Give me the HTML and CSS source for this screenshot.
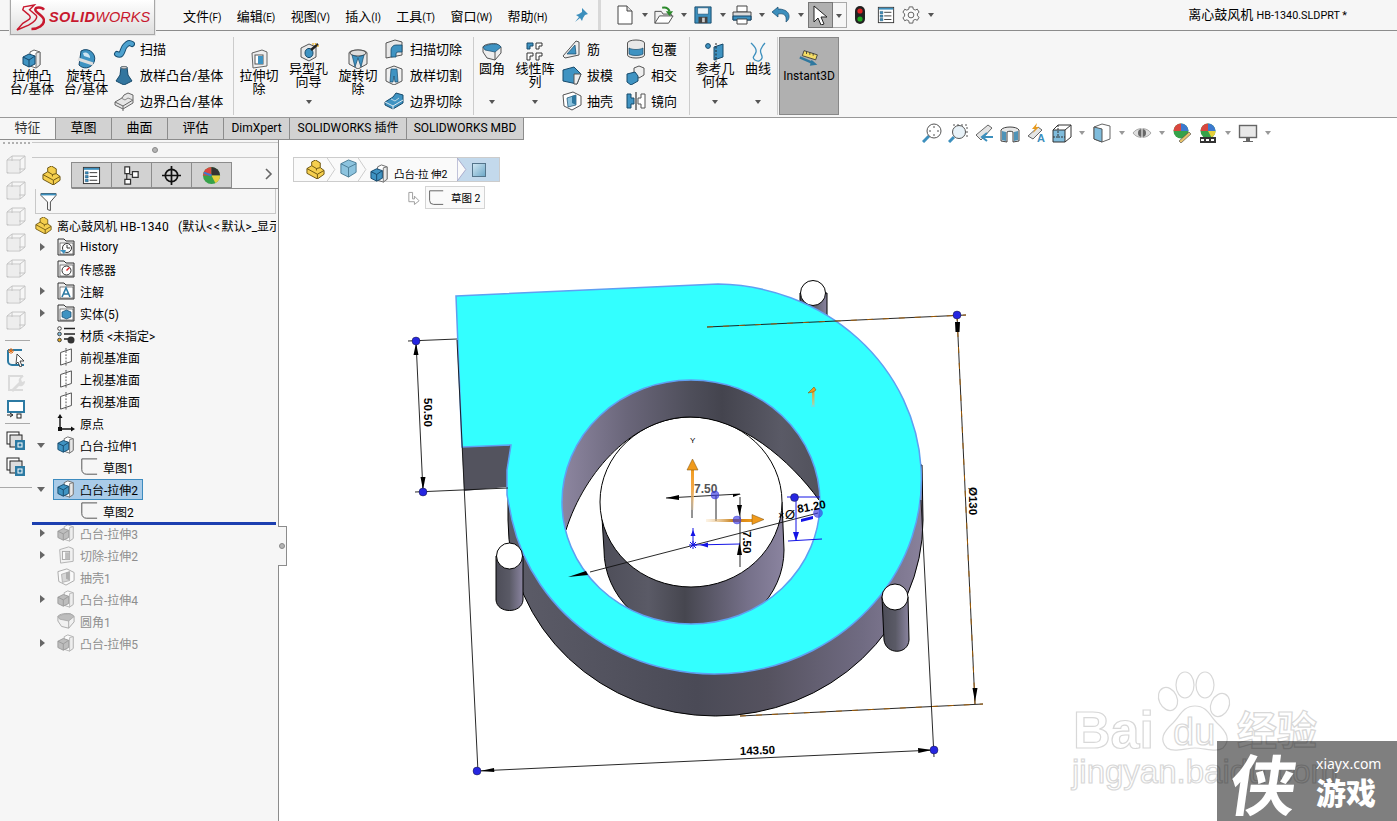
FILE: index.html
```html
<!DOCTYPE html>
<html lang="zh">
<head>
<meta charset="utf-8">
<title>SOLIDWORKS</title>
<link rel="stylesheet" href="styles.css">
</head>
<body>
<svg class="defs" width="0" height="0">
<defs>
<symbol id="boss" viewBox="0 0 20 20"><path d="M8 3l4-2 6 2v13l-4 3-6-2z" fill="#fff" stroke="#666"/><path d="M14 4l4-1v13l-4 3z" fill="#e8e8e8" stroke="#777"/><path d="M1 8l6-3 6 2v8l-6 3-6-3z" fill="#3f93c2" stroke="#15476a"/><path d="M1 8l6 3 6-4M7 11v7" fill="none" stroke="#15476a"/></symbol>
<symbol id="revolve" viewBox="0 0 20 20"><path d="M5 2a9 9 0 0 1 12 13 9 9 0 0 1-14 1z" fill="#3f93c2" stroke="#15476a"/><path d="M2 10l15 5" stroke="#ddd" stroke-width="3"/><path d="M7 4a5 5 0 0 1 7 5l-6-2z" fill="#cfe5f2"/></symbol>
<symbol id="sweep" viewBox="0 0 20 20"><path d="M3 15c6 3 5-5 8-8s4-4 7-2" fill="none" stroke="#174f73" stroke-width="6" stroke-linecap="round"/><path d="M3 15c6 3 5-5 8-8s4-4 7-2" fill="none" stroke="#4ea2cf" stroke-width="4" stroke-linecap="round"/></symbol>
<symbol id="loft" viewBox="0 0 20 20"><path d="M7 2h6l1 8 4 6-8 4-8-4 4-6z" fill="#33769f" stroke="#174a6b"/><ellipse cx="10" cy="2.6" rx="3" ry="1.2" fill="#ccc" stroke="#555" stroke-width=".6"/></symbol>
<symbol id="bound" viewBox="0 0 20 20"><path d="M1 11l7-4 2-3 4-2 5 2v8l-10 6-8-4z" fill="#e6e6e6" stroke="#666"/><path d="M1 11l8 4 10-6M9 15v5" fill="none" stroke="#666"/><path d="M7 7l4 2 3-2 5 2" fill="none" stroke="#888"/></symbol>
<symbol id="cut" viewBox="0 0 20 20"><path d="M3 4l10-3 5 2v14l-14 2z" fill="#eee" stroke="#666"/><rect x="6" y="6" width="8" height="9" fill="#fff" stroke="#555"/><path d="M9 7h5v8H9z" fill="#3f93c2"/></symbol>
<symbol id="hole" viewBox="0 0 20 20"><path d="M2 6l8-4 7 3v10l-7 4-8-4z" fill="#e8e8e8" stroke="#555"/><ellipse cx="10" cy="11" rx="4" ry="4.6" fill="#3f93c2" stroke="#174a6b"/><path d="M12 8l7-6" stroke="#222" stroke-width="2.4"/><path d="M16 1l1 2M18 4l2 0M14 1v2" stroke="#e6a400"/></symbol>
<symbol id="revcut" viewBox="0 0 20 20"><path d="M1 4c0-4 18-4 18 0v11l-9 5-9-5z" fill="#e8e8e8" stroke="#555"/><ellipse cx="10" cy="4" rx="8" ry="3" fill="#ddd" stroke="#555"/><path d="M4 6l3 12 3-9 3 9 3-12-6 2z" fill="#3f93c2" stroke="#174a6b" stroke-width=".7"/></symbol>
<symbol id="swcut" viewBox="0 0 20 20"><path d="M2 4l9-3 7 2v13l-16 3z" fill="#e8e8e8" stroke="#555"/><path d="M7 18v-7a5 5 0 0 1 5-5h6v7h-4a2 2 0 0 0-2 2v3z" fill="#3f93c2" stroke="#174a6b" stroke-width=".8"/></symbol>
<symbol id="lfcut" viewBox="0 0 20 20"><path d="M2 4l8-3 8 3v12l-8 4-8-4z" fill="#f0f0f0" stroke="#555"/><path d="M7 4h6l1 13h-3l-1-6-1 6H6z" fill="#3f93c2" stroke="#174a6b" stroke-width=".7"/></symbol>
<symbol id="bdcut" viewBox="0 0 20 20"><path d="M1 11l8-5 3-4 7 2v8l-10 6-8-4z" fill="#3f93c2" stroke="#174a6b"/><path d="M1 11l8 4 10-6M9 15v4" fill="none" stroke="#dfe9ef"/><path d="M7 8l4 2 4-3" fill="none" stroke="#bcd9e8"/></symbol>
<symbol id="fillet" viewBox="0 0 20 20"><path d="M1 5c1-3 10-4 14-3l4 3v6l-6 7-8-2-4-6z" fill="#eee" stroke="#555"/><path d="M3 8l10 2 6-5c-1-2-4-3-6-3-4 0-9 1-12 3z" fill="#3f93c2" stroke="#174a6b" stroke-width=".7"/><path d="M13 10l0 8" stroke="#555"/></symbol>
<symbol id="pattern" viewBox="0 0 20 20"><g fill="#3f93c2" stroke="#174a6b"><path d="M2 1h6v3h-3v3H2z"/></g><g fill="#fff" stroke="#333"><path d="M11 1h6v3h-3v3h-3zM2 11h6v3H5v4H2zM11 11h6v3h-3v4h-3z"/></g></symbol>
<symbol id="rib" viewBox="0 0 20 20"><path d="M1 17l13-15 3 1v13l-14 3z" fill="#eee" stroke="#555"/><path d="M5 15l8-9 1 9z" fill="#3f93c2" stroke="#174a6b" stroke-width=".7"/></symbol>
<symbol id="draft" viewBox="0 0 20 20"><path d="M1 5l11-3 7 7-4 10-14-3z" fill="#3f93c2" stroke="#174a6b"/><path d="M12 9l7 0-4 10H12z" fill="#eee" stroke="#555"/></symbol>
<symbol id="shell" viewBox="0 0 20 20"><path d="M1 4l10-3 8 4v9l-9 5-8-4z" fill="#fff" stroke="#555"/><path d="M5 7l9-3v10l-8 2z" fill="#8cc3de" stroke="#174a6b" stroke-width=".7"/><path d="M10 5v7l4 2V4z" fill="#2f789f"/></symbol>
<symbol id="wrap" viewBox="0 0 20 20"><ellipse cx="10" cy="4" rx="8.5" ry="3" fill="#e8e8e8" stroke="#555"/><path d="M1.5 4v12c0 4 17 4 17 0V4" fill="#e8e8e8" stroke="#555"/><path d="M3 9c3 2 11 2 14 0v6c-3 2-11 2-14 0z" fill="#3f93c2" stroke="#174a6b" stroke-width=".7"/></symbol>
<symbol id="inter" viewBox="0 0 20 20"><path d="M8 3l5-2 5 2v7l-5 3-5-2z" fill="#eee" stroke="#555"/><path d="M1 9l8-2 3 4v5l-7 4-4-3z" fill="#3f93c2" stroke="#174a6b"/></symbol>
<symbol id="mirror" viewBox="0 0 20 20"><path d="M1 3h4v4h3v6H5v4H1z" fill="#3f93c2" stroke="#174a6b"/><path d="M10 1v18" stroke="#111" stroke-width="1"/><path d="M19 3h-4v4h-3v6h3v4h4z" fill="#fff" stroke="#555"/></symbol>
<symbol id="refgeo" viewBox="0 0 20 20"><circle cx="3" cy="4" r="2.4" fill="#3f93c2" stroke="#174a6b"/><path d="M9 5l9-3v13l-9 3z" fill="#3f93c2" stroke="#174a6b"/><path d="M11 1v19" stroke="#222" stroke-dasharray="2 1.5"/></symbol>
<symbol id="curve" viewBox="0 0 20 20"><path d="M3 1c3 3 6 5 5 9s-5 5-1 8c3 2 6 1 7-2s-3-5-1-9 3-5 4-6" fill="none" stroke="#3c8fbd" stroke-width="1.3"/></symbol>
<symbol id="i3d" viewBox="0 0 24 24"><path d="M6 2l16 5-2 6L4 8z" fill="#f4dc66" stroke="#333"/><path d="M9 3v3M13 4v3M17 5v3" stroke="#333"/><path d="M1 10l16 7" stroke="#2f789f" stroke-width="3"/><path d="M15 13l7 6-9 1z" fill="#2f789f"/></symbol>
<symbol id="newdoc" viewBox="0 0 18 20"><path d="M2 1h9l5 5v13H2z" fill="#fff" stroke="#444"/><path d="M11 1v5h5" fill="#ddd" stroke="#444"/></symbol>
<symbol id="open" viewBox="0 0 22 20"><path d="M1 19V6h7l2 3h9v3" fill="#f1f1f1" stroke="#444"/><path d="M1 19l5-8h15l-5 8z" fill="#fff" stroke="#444"/><path d="M9 2c5-1 7 1 8 4" fill="none" stroke="#2c8a2c" stroke-width="2.4"/><path d="M13 6h8l-4 5z" fill="#2c8a2c"/></symbol>
<symbol id="save" viewBox="0 0 20 20"><path d="M1 1h18v18H1z" fill="#3c8fbd" stroke="#15476a"/><path d="M4 2h12v7H4z" fill="#f0f6f9" stroke="#15476a" stroke-width=".6"/><path d="M5 12h10v7H5z" fill="#444"/><path d="M9 13h3v5H9z" fill="#ccc"/></symbol>
<symbol id="print" viewBox="0 0 20 20"><path d="M5 1h10v6H5z" fill="#fff" stroke="#444"/><path d="M1 7h18v8H1z" fill="#dcdcdc" stroke="#444"/><path d="M1 11h18v4H1z" fill="#3c8fbd" stroke="#15476a"/><path d="M5 14h10v5H5z" fill="#fff" stroke="#444"/></symbol>
<symbol id="undo" viewBox="0 0 20 20"><path d="M7 2L1 7l6 5V9c6-1 9 1 8 8 5-3 5-13-8-13z" fill="#3c8fbd" stroke="#15476a" stroke-width=".7"/></symbol>
<symbol id="cursor" viewBox="0 0 20 20"><path d="M3 1l13 11h-6l3 7-3 1-3-7-4 4z" fill="#fff" stroke="#222"/></symbol>
<symbol id="traffic" viewBox="0 0 12 20"><rect x="1" y="1" width="10" height="18" rx="5" fill="#222"/><circle cx="6" cy="6" r="2.6" fill="#d22"/><circle cx="6" cy="14" r="2.6" fill="#2a2"/></symbol>
<symbol id="lst" viewBox="0 0 20 20"><rect x="1.500" y="1.500" width="17" height="17" fill="#fff" stroke="#333"/><path d="M2 2h16v2H2z" fill="#3c8fbd"/><path d="M3.500 6h3v2.500h-3zM3.500 10h3v2.500h-3zM3.500 14h3v2.500h-3z" fill="#3c8fbd" stroke="#15476a" stroke-width=".5"/><path d="M8 7h8M8 11h8M8 15h8" stroke="#333"/></symbol>
<symbol id="gear" viewBox="0 0 20 20"><path d="M8 1h4l.5 2.500 2.200 1 2.300-1 2 3.400-1.900 1.600v2.400l1.900 1.600-2 3.400-2.300-1-2.200 1L12 19H8l-.5-2.600-2.200-1-2.300 1-2-3.400 1.900-1.600V8.600L1 7l2-3.400 2.300 1 2.200-1z" fill="#fbfbfb" stroke="#555"/><circle cx="10" cy="10" r="3.200" fill="none" stroke="#555"/></symbol>
<symbol id="pin" viewBox="0 0 14 14"><path d="M8 0l6 6-3 1-2 3-1 3-2-3-5 4 4-5-3-2 3-1 3-2z" fill="#3c8fbd"/></symbol>
<symbol id="part" viewBox="0 0 20 20"><path d="M1 9l5-3V2l4-2 5 3v5l4 3v4l-7 5-11-6z" fill="#f5cf4e" stroke="#6a5310"/><path d="M1 9l11 6 7-4M12 15v5M6 6l5 3 4-1M11 9v2" fill="none" stroke="#6a5310"/></symbol>
<symbol id="plane" viewBox="0 0 18 20"><path d="M3 5l12-4v14L3 19z" fill="#fff" stroke="#444"/><path d="M9 0v20" stroke="#444" stroke-dasharray="2 1.500"/></symbol>
<symbol id="sketch" viewBox="0 0 20 20"><path d="M2 1v12a5 5 0 0 0 5 5h12" fill="none" stroke="#555" stroke-width="1.100"/><path d="M2 1h17" stroke="#555" stroke-width="1.100"/></symbol>
<symbol id="origin" viewBox="0 0 18 18"><path d="M3 2v13h13" fill="none" stroke="#111" stroke-width="1.400"/><path d="M3 0l2.500 4h-5zM18 15l-4 2.500v-5z" fill="#111"/><rect x="1" y="13" width="4" height="4" fill="#111"/></symbol>
<symbol id="folder" viewBox="0 0 18 18"><path d="M1 17V1h6l2 2h8v14z" fill="#eee" stroke="#333"/><rect x="3" y="5" width="13" height="11" fill="#fff" stroke="#333" stroke-width=".6"/></symbol>
<symbol id="wire" viewBox="0 0 20 20"><path d="M1 5h13v13H1zM6 1h13v13H6zM1 5l5-4M14 5l5-4M14 18l5-4M1 18l5-4" fill="none" stroke="#888"/><path d="M2 6h11v11H2z" fill="#e4e4e4"/></symbol>
<symbol id="stack" viewBox="0 0 20 20"><rect x="1" y="1" width="12" height="12" fill="#fff" stroke="#222"/><rect x="4" y="4" width="12" height="12" fill="#ddd" stroke="#222"/><rect x="9" y="9" width="10" height="10" fill="#2c7aa3"/><rect x="12" y="12" width="4" height="4" fill="none" stroke="#fff"/></symbol>
</defs>
</svg>

<div class="app">
  <header class="topbar">
    <div class="menuzone">
      <div class="logo">
        <svg class="ds" viewBox="0 0 30 28"><path d="M8 3l11-2-5 5 7 6c2 3-3 7-8 10L1 27l6-7 5-3c4-2 3-4 1-6L7 6z" fill="none" stroke="#c8182e" stroke-width="1.500"/><path d="M29 6c-2-3-9-3-9 0s9 6 9 11-6 9-13 9" fill="none" stroke="#c8182e" stroke-width="2.600"/></svg>
        <span class="brand"><b>SOLID</b>WORKS</span>
      </div>
      <nav class="menu">
        <span>文件<small>(F)</small></span><span>编辑<small>(E)</small></span><span>视图<small>(V)</small></span><span>插入<small>(I)</small></span><span>工具<small>(T)</small></span><span>窗口<small>(W)</small></span><span>帮助<small>(H)</small></span>
      </nav>
      <svg class="pin"><use href="#pin"/></svg>
    </div>
    <div class="quick">
      <span class="qi"><svg class="i18"><use href="#newdoc"/></svg></span><i class="qc"></i>
      <span class="qi"><svg class="i20"><use href="#open"/></svg></span><i class="qc"></i>
      <span class="qi"><svg class="i18"><use href="#save"/></svg></span><i class="qc"></i>
      <span class="qi"><svg class="i20"><use href="#print"/></svg></span><i class="qc"></i>
      <span class="qi"><svg class="i20"><use href="#undo"/></svg></span><i class="qc"></i>
      <span class="selbtn"><svg class="i20"><use href="#cursor"/></svg></span><span class="seldrop"></span>
      <span class="qi qt"><svg class="i20"><use href="#traffic"/></svg></span>
      <span class="qi q6"><svg class="i18"><use href="#lst"/></svg></span>
      <span class="qi q5"><svg class="i18"><use href="#gear"/></svg></span><i class="qc"></i>
    </div>
    <div class="doctitle">离心鼓风机 <span>HB-1340.SLDPRT *</span></div>
  </header>

  <section class="ribbon">
    <div class="group g1">
      <div class="big low w54"><svg class="ri"><use href="#boss"/></svg><span>拉伸凸<br>台/基体</span></div>
      <div class="big low w54"><svg class="ri"><use href="#revolve"/></svg><span>旋转凸<br>台/基体</span></div>
      <div class="smalls">
        <div class="sr"><svg class="si"><use href="#sweep"/></svg>扫描</div>
        <div class="sr"><svg class="si"><use href="#loft"/></svg>放样凸台/基体</div>
        <div class="sr"><svg class="si"><use href="#bound"/></svg>边界凸台/基体</div>
      </div>
    </div>
    <div class="group g2">
      <div class="big low w50"><svg class="ri"><use href="#cut"/></svg><span>拉伸切<br>除</span></div>
      <div class="big w49"><svg class="ri"><use href="#hole"/></svg><span>异型孔<br>向导</span><i class="cr"></i></div>
      <div class="big low w50"><svg class="ri"><use href="#revcut"/></svg><span>旋转切<br>除</span></div>
      <div class="smalls">
        <div class="sr"><svg class="si"><use href="#swcut"/></svg>扫描切除</div>
        <div class="sr"><svg class="si"><use href="#lfcut"/></svg>放样切割</div>
        <div class="sr"><svg class="si"><use href="#bdcut"/></svg>边界切除</div>
      </div>
    </div>
    <div class="group g3">
      <div class="big w36"><svg class="ri"><use href="#fillet"/></svg><span>圆角</span><i class="cr"></i></div>
      <div class="big w50"><svg class="ri"><use href="#pattern"/></svg><span>线性阵<br>列</span><i class="cr"></i></div>
      <div class="smalls tight c3">
        <div class="sr"><svg class="si"><use href="#rib"/></svg>筋</div>
        <div class="sr"><svg class="si"><use href="#draft"/></svg>拔模</div>
        <div class="sr"><svg class="si"><use href="#shell"/></svg>抽壳</div>
      </div>
      <div class="smalls tight c4">
        <div class="sr"><svg class="si"><use href="#wrap"/></svg>包覆</div>
        <div class="sr"><svg class="si"><use href="#inter"/></svg>相交</div>
        <div class="sr"><svg class="si"><use href="#mirror"/></svg>镜向</div>
      </div>
    </div>
    <div class="group g4">
      <div class="big w50"><svg class="ri"><use href="#refgeo"/></svg><span>参考几<br>何体</span><i class="cr"></i></div>
      <div class="big w36"><svg class="ri"><use href="#curve"/></svg><span>曲线</span><i class="cr"></i></div>
    </div>
    <div class="instant"><svg class="i3d"><use href="#i3d"/></svg><span>Instant3D</span></div>
  </section>

  <div class="tabrow">
    <div class="tab w56 on">特征</div><div class="tab w56">草图</div><div class="tab w56">曲面</div><div class="tab w56">评估</div><div class="tab w66">DimXpert</div><div class="tab w117">SOLIDWORKS 插件</div><div class="tab w117">SOLIDWORKS MBD</div>
    <div class="viewbar">
      <span class="vi"><svg class="v20" viewBox="0 0 20 20"><path d="M1 19l6-6" stroke="#3c8fbd" stroke-width="3"/><circle cx="12" cy="8" r="7" fill="#fff" stroke="#555"/><path d="M12 3v2M12 11v2M7 8h2M15 8h2" stroke="#555"/></svg></span>
      <span class="vi"><svg class="v20" viewBox="0 0 20 20"><path d="M5 2h14v14" fill="none" stroke="#555" stroke-dasharray="2 2"/><path d="M1 19l5-5" stroke="#3c8fbd" stroke-width="3"/><circle cx="11" cy="9" r="6.500" fill="#e8f2f8" stroke="#555"/></svg></span>
      <span class="vi"><svg class="v20" viewBox="0 0 20 20"><path d="M2 12L14 2l4 3L7 17z" fill="#e4e4e4" stroke="#666"/><path d="M19 14H9M13 10l-5 4 5 4" fill="none" stroke="#3c8fbd" stroke-width="2"/></svg></span>
      <span class="vi"><svg class="v20" viewBox="0 0 20 20"><path d="M1 7c2-4 16-4 18 0v11l-6 1V9c-1-1-5-1-6 0v10l-6-1z" fill="#e8e8e8" stroke="#444"/><path d="M2 8l4 1v9l-4-1zM14 9l4-1v9l-4 1z" fill="#4f93b8"/></svg></span>
      <span class="vi"><svg class="v20" viewBox="0 0 20 20"><path d="M2 13L12 4l4 3-9 9z" fill="#e4e4e4" stroke="#666"/><path d="M11 0L6 6h3L7 10l6-6h-3z" fill="#e89a1c"/><text class="vtxt" x="11" y="19">A</text></svg></span>
      <span class="vi"><svg class="v20" viewBox="0 0 20 20"><path d="M1 7h12v12H1z" fill="#7fbcdc" stroke="#333"/><path d="M1 7l5-5h13v12l-6 5M13 7l6-5" fill="none" stroke="#333"/><path d="M6 2v12H1M6 14l7 0" fill="none" stroke="#333" stroke-dasharray="2 1"/></svg></span><i class="vc"></i>
      <span class="vi"><svg class="v20" viewBox="0 0 20 20"><path d="M2 4l8-3 8 2v13l-8 3-8-3z" fill="#fff" stroke="#666"/><path d="M2 4l8 2v13l-8-3z" fill="#7fbcdc" stroke="#555"/></svg></span><i class="vc"></i>
      <span class="vi"><svg class="v20" viewBox="0 0 20 20"><path d="M1 10c4-6 14-6 18 0-4 6-14 6-18 0z" fill="#ddd" stroke="#aaa"/><circle cx="10" cy="10" r="4" fill="#666"/><path d="M10 3v14" stroke="#fff"/></svg></span><i class="vc"></i>
      <span class="vi"><svg class="v20" viewBox="0 0 20 20"><circle cx="9" cy="8" r="7.500" fill="#36a24a"/><path d="M9 8L1.500 8a7.500 7.500 0 0 1 7.500-7.500z" fill="#d9473f"/><path d="M9 8V.5A7.500 7.500 0 0 1 16.500 8z" fill="#3c79cf"/><path d="M7 18l10-9 2 2-10 9z" fill="#e8c26a" stroke="#444" stroke-width=".6"/></svg></span>
      <span class="vi"><svg class="v20" viewBox="0 0 20 20"><circle cx="10" cy="8" r="7.500" fill="#36a24a"/><path d="M10 8H2.500A7.500 7.500 0 0 1 10 .5z" fill="#d9473f"/><path d="M10 8V.5A7.500 7.500 0 0 1 17.500 8z" fill="#3c79cf"/><path d="M10 8h7.500a7.500 7.500 0 0 1-4 6.500z" fill="#e5cf3c"/><path d="M2 14h16v6H2z" fill="#333"/><path d="M3 16h3v2H3zM8 16h3v2H8zM13 16h3v2h-3z" fill="#fff"/></svg></span><i class="vc"></i>
      <span class="vi"><svg class="v20" viewBox="0 0 20 20"><rect x="1.500" y="2.500" width="17" height="12" fill="#e8e8e8" stroke="#666" stroke-width="1.400"/><path d="M8 15h4v3h3v1H5v-1h3z" fill="#666"/></svg></span><i class="vc"></i>
    </div>
  </div>

  <main class="main">
    <aside class="panel">
      <div class="strip">
        <div class="grip"></div>
        <svg class="st fade"><use href="#wire"/></svg><svg class="st fade"><use href="#wire"/></svg><svg class="st fade"><use href="#wire"/></svg><svg class="st fade"><use href="#wire"/></svg><svg class="st fade"><use href="#wire"/></svg><svg class="st fade"><use href="#wire"/></svg><svg class="st fade"><use href="#wire"/></svg>
        <hr class="sp s1">
        <svg class="st" viewBox="0 0 20 20"><path d="M2 3v11a4 4 0 0 0 4 4h12M2 3h14" fill="none" stroke="#2c7aa3" stroke-width="2"/><path d="M5 1v6M2 4h6M3 2l4 4M7 2L3 6" stroke="#e2701a"/><path d="M11 7l7 7h-4l2 5-2 1-2-5-2 2z" fill="#fff" stroke="#222" stroke-width=".8"/></svg>
        <svg class="st fade" viewBox="0 0 20 20"><path d="M2 2h15v2H4v12h13v2H2z" fill="#bbb"/><path d="M5 17l8-8c-1-3 1-6 5-6l-3 3 1 3 3-1c0 4-3 6-6 5l-6 6z" fill="#bbb"/></svg>
        <svg class="st" viewBox="0 0 20 20"><rect x="2" y="2" width="16" height="11" fill="#fff" stroke="#2c7aa3" stroke-width="2"/><path d="M1 16h5M4 14l3 2-3 2" fill="none" stroke="#222"/><rect x="11" y="15" width="4" height="4" fill="#fff" stroke="#222"/></svg>
        <hr class="sp s2">
        <svg class="st"><use href="#stack"/></svg>
        <svg class="st"><use href="#stack"/></svg>
        <hr class="sp s3">
      </div>
      <div class="pane">
        <div class="handle"><i class="knob"></i></div>
        <div class="mgr">
          <span class="mt act"><svg class="mi"><use href="#part"/></svg></span>
          <span class="mt"><svg class="mi"><use href="#lst"/></svg></span>
          <span class="mt"><svg class="mi" viewBox="0 0 20 20"><path d="M3 1h5v7H3zM11 6h6v6h-6zM3 14h6v5H3zM5 8v6" fill="#fff" stroke="#333" stroke-width="1.300"/><path d="M8 9h3" stroke="#333"/></svg></span>
          <span class="mt"><svg class="mi" viewBox="0 0 20 20"><circle cx="10" cy="10" r="6.500" fill="none" stroke="#111" stroke-width="1.800"/><path d="M10 0v20M0 10h20" stroke="#111" stroke-width="1.800"/></svg></span>
          <span class="mt"><svg class="mi" viewBox="0 0 20 20"><circle cx="10" cy="10" r="9" fill="#36a24a"/><path d="M10 10H1a9 9 0 0 1 9-9z" fill="#d9473f"/><path d="M10 10V1a9 9 0 0 1 9 9z" fill="#333"/><path d="M10 10h9a9 9 0 0 1-5 8z" fill="#e5cf3c"/><path d="M2 7l8 3" stroke="#3c79cf" stroke-width="2"/></svg></span>
          <svg class="chev" viewBox="0 0 8 12"><path d="M1 1l5 5-5 5" fill="none" stroke="#666" stroke-width="1.600"/></svg>
        </div>
        <div class="filter"><svg class="funnel" viewBox="0 0 18 20"><path d="M1 1h16v2l-6 7v9l-3-1v-8L1 3z" fill="#fff" stroke="#444"/><path d="M1 1h16v2H1z" fill="#3c8fbd"/></svg></div>
        <div class="tree">
          <div class="root"><svg class="ti"><use href="#part"/></svg><span class="rtext">离心鼓风机 <span class="rl">HB-1340</span>&nbsp;&nbsp; (默认<span class="lt">&lt;&lt;</span>默认&gt;_显示状态 1&gt;)</span></div>
          <div class="row"><i class="ar"></i><span class="node"><svg class="ti" viewBox="0 0 18 18"><use href="#folder" width="18" height="18"/><circle cx="10" cy="10" r="4.500" fill="#fff" stroke="#333"/><path d="M10 7v3h3" fill="none" stroke="#333"/><path d="M3 12h6l-2 4z" fill="#3c8fbd"/></svg>History</span></div>
          <div class="row"><i class="noar"></i><span class="node"><svg class="ti" viewBox="0 0 18 18"><use href="#folder" width="18" height="18"/><circle cx="9.500" cy="10.500" r="4.500" fill="#fff" stroke="#333"/><path d="M9.500 10.500l3-3" stroke="#d22" stroke-width="1.400"/></svg>传感器</span></div>
          <div class="row"><i class="ar"></i><span class="node"><svg class="ti" viewBox="0 0 18 18"><use href="#folder" width="18" height="18"/><path d="M5 15l4-9 4 9M6.500 12h5" fill="none" stroke="#2c7aa3" stroke-width="1.600"/></svg>注解</span></div>
          <div class="row"><i class="ar"></i><span class="node"><svg class="ti" viewBox="0 0 18 18"><use href="#folder" width="18" height="18"/><path d="M5 8l4.500-2 4.500 2v5l-4.500 2L5 13z" fill="#3f93c2" stroke="#15476a" stroke-width=".7"/></svg>实体(5)</span></div>
          <div class="row"><i class="noar"></i><span class="node"><svg class="ti" viewBox="0 0 18 18"><circle cx="2.500" cy="2.500" r="1.800" fill="#fff" stroke="#444"/><circle cx="2.500" cy="8" r="1.800" fill="#7fbcdc" stroke="#444"/><circle cx="2.500" cy="14" r="1.800" fill="#e2a81a" stroke="#444"/><path d="M7 2.500h11M7 8h11M7 13h4" stroke="#222" stroke-width="1.500"/><circle cx="14" cy="14" r="3.500" fill="#333"/></svg>材质 &lt;未指定&gt;</span></div>
          <div class="row"><i class="noar"></i><span class="node"><svg class="ti"><use href="#plane"/></svg>前视基准面</span></div>
          <div class="row"><i class="noar"></i><span class="node"><svg class="ti"><use href="#plane"/></svg>上视基准面</span></div>
          <div class="row"><i class="noar"></i><span class="node"><svg class="ti"><use href="#plane"/></svg>右视基准面</span></div>
          <div class="row"><i class="noar"></i><span class="node"><svg class="ti"><use href="#origin"/></svg>原点</span></div>
          <div class="row"><i class="ar down"></i><span class="node"><svg class="ti"><use href="#boss"/></svg>凸台-拉伸1</span></div>
          <div class="row child"><span class="node"><svg class="ti"><use href="#sketch"/></svg>草图1</span></div>
          <div class="row"><i class="ar down"></i><span class="node sel"><svg class="ti"><use href="#boss"/></svg>凸台-拉伸2</span></div>
          <div class="row child"><span class="node"><svg class="ti"><use href="#sketch"/></svg>草图2</span></div>
          <div class="rollback"></div>
          <div class="row off"><i class="ar"></i><span class="node"><svg class="ti"><use href="#boss"/></svg>凸台-拉伸3</span></div>
          <div class="row off"><i class="ar"></i><span class="node"><svg class="ti"><use href="#cut"/></svg>切除-拉伸2</span></div>
          <div class="row off"><i class="noar"></i><span class="node"><svg class="ti"><use href="#shell"/></svg>抽壳1</span></div>
          <div class="row off"><i class="ar"></i><span class="node"><svg class="ti"><use href="#boss"/></svg>凸台-拉伸4</span></div>
          <div class="row off"><i class="noar"></i><span class="node"><svg class="ti"><use href="#fillet"/></svg>圆角1</span></div>
          <div class="row off"><i class="ar"></i><span class="node"><svg class="ti"><use href="#boss"/></svg>凸台-拉伸5</span></div>
        </div>
      </div>
      <div class="gripper"><i class="knob"></i></div>
    </aside>

    <div class="canvas">
      <svg class="model" viewBox="279 140 1118 681" width="1118" height="681">
        <defs>
          <linearGradient id="wallG" gradientUnits="userSpaceOnUse" x1="510" y1="0" x2="925" y2="0"><stop offset="0" stop-color="#5c5c68"/><stop offset=".45" stop-color="#4a4a56"/><stop offset=".62" stop-color="#55525f"/><stop offset=".85" stop-color="#706b82"/><stop offset="1" stop-color="#8a829c"/></linearGradient>
          <linearGradient id="bandG" gradientUnits="userSpaceOnUse" x1="562" y1="0" x2="820" y2="0"><stop offset="0" stop-color="#8d86a0"/><stop offset=".25" stop-color="#6a667a"/><stop offset=".5" stop-color="#4e4e5a"/><stop offset=".62" stop-color="#44444e"/><stop offset=".85" stop-color="#5a5a66"/><stop offset="1" stop-color="#52525c"/></linearGradient>
          <linearGradient id="hubG" gradientUnits="userSpaceOnUse" x1="603" y1="0" x2="785" y2="0"><stop offset="0" stop-color="#4e4e59"/><stop offset=".25" stop-color="#5a5a66"/><stop offset=".45" stop-color="#46464f"/><stop offset=".8" stop-color="#76718a"/><stop offset="1" stop-color="#8b84a0"/></linearGradient>
          <linearGradient id="pegG"><stop offset="0" stop-color="#4d4d58"/><stop offset=".5" stop-color="#5a5a66"/><stop offset="1" stop-color="#8a84a0"/></linearGradient>
          <linearGradient id="upG" x1="0" y1="0" x2="0" y2="1"><stop offset="0" stop-color="#f09a1c"/><stop offset=".5" stop-color="#f3a94a"/><stop offset="1" stop-color="#f6d7a8" stop-opacity=".3"/></linearGradient>
          <linearGradient id="rightG"><stop offset="0" stop-color="#f6d7a8" stop-opacity=".3"/><stop offset=".6" stop-color="#c47a10"/><stop offset="1" stop-color="#f09a1c"/></linearGradient>
          <linearGradient id="smG" x1="0" y1="0" x2="0" y2="1"><stop offset="0" stop-color="#f09a1c"/><stop offset="1" stop-color="#9fd6b0"/></linearGradient>
          <clipPath id="holeC"><ellipse cx="691" cy="502" rx="129" ry="122"/></clipPath>
        </defs>
        <path class="ln" d="M800 293v22l27 15v-37z" fill="url(#pegG)"/>
        <circle class="ln" cx="813" cy="293" r="12.500" fill="#fff"/>
        <path class="ln" d="M508 520A207.500 196 0 0 0 923 520L922 465L508 480Z" fill="url(#wallG)"/>
        <path d="M462 447L511 445L507 487L464 491Z" fill="#53535e"/>
        <ellipse cx="691" cy="502" rx="129" ry="122" fill="#fff"/>
        <g clip-path="url(#holeC)">
          <path class="ln" d="M601 502L604 550A90 85 0 0 0 784 550L782 502Z" fill="url(#hubG)"/>
          <ellipse class="ln" cx="691" cy="502" rx="91" ry="85" fill="#fff"/>
          <path d="M566 530C585 470 635 417 690 417C740 417 790 460 819 500L830 380H550V530Z" fill="url(#bandG)"/>
          <path class="ln" d="M566 530C585 470 635 417 690 417C740 417 790 460 819 500" fill="none"/>
        </g>
        <path class="cy" fill-rule="evenodd" d="M456 296L718 284A207 195 0 1 1 512 520L507 495L507 470L511 445L462 447ZM562 502A129 122 0 1 0 820 502A129 122 0 1 0 562 502Z"/>
        <path class="ln" d="M496 556V600C497 614 522 614 523 600V556Z" fill="url(#pegG)"/>
        <circle class="ln" cx="509.500" cy="556" r="13" fill="#fff"/>
        <path class="ln" d="M882 597L884 640C886 655 908 655 909 640L908 597Z" fill="url(#pegG)"/>
        <circle class="ln" cx="895" cy="597" r="13" fill="#fff"/>

        <path class="dim" d="M408 341L457 339M415 492L508 488M416 341L423 492"/>
        <path class="ah" d="M416 343l-2.500 12h5zM423 490l-2.500-13h5z"/>
        <text class="dt" transform="translate(424 398) rotate(90)">50.50</text>

        <path class="dim" d="M707 327L966 315M740 716L983 704M957 315L975 704"/>
        <path class="dimo" d="M707 327L966 315M740 716L983 704M957 315L975 704"/>
        <path class="ah" d="M955 322h5l-.5 10h-4zM975 702l-2.500-14h5z"/>
        <text class="dt" transform="translate(969 487) rotate(90)">Ø130</text>

        <path class="dim" d="M457 340L478 772M921 500L934 757M477 771L934 750"/>
        <path class="ah" d="M480 771l14-3 .3 4zM932 750l-14-2 .3 5z"/>
        <text class="dt" transform="translate(740 755) rotate(-2)">143.50</text>

        <path class="dim" d="M590 572L818 513"/>
        <path class="ah" d="M568 577l18-6 2 4z"/>

        <text class="yl" x="690" y="443">Y</text>
        <path class="dim" d="M692 488V518M666 498L740 494M716 496V521M740 497V567"/>
        <path class="ah" d="M666 498l13-3v5zM692 520v-1M733 494l8 0-8 3zM737 505h5l-2.500 11zM737 555h5l-2.500-13z"/>
        <rect x="691" y="468" width="3" height="42" fill="url(#upG)"/>
        <path class="orh" d="M692.500 459l5.500 11h-11z"/>
        <rect x="706" y="519" width="46" height="3" fill="url(#rightG)"/>
        <path class="orh" d="M764 519.500l-12 5v-10z"/>
        <text class="dg" x="694" y="493">7.50</text>
        <text class="dt" transform="translate(743 531) rotate(90)">7.50</text>
        <path class="bl" d="M693 528V545M693 545L740 544M787 497L820 497M796 497V540M788 541L822 539"/>
        <path class="blf" d="M693 530l-2.500 6h5zM700 545l8-2.500v5zM796 541l-3-9h6zM801 519l12-3v3l-12 3z"/>
        <path class="star" d="M693 541v8M689 545h8M690 542l6 6M696 542l-6 6"/>
        <circle class="blp" cx="715" cy="495" r="4"/><circle class="blp" cx="737" cy="520" r="4"/>
        <circle class="bd" cx="794.500" cy="497.500" r="4"/><circle class="blp" cx="818" cy="513" r="4.500"/>
        <circle class="bd" cx="416" cy="341" r="4"/><circle class="bd" cx="423" cy="492" r="4"/>
        <circle class="bd" cx="957" cy="315" r="4"/><circle class="bd" cx="477" cy="771" r="4"/><circle class="bd" cx="934" cy="750" r="4"/>
        <text class="dphi" x="785" y="519">Ø</text>
        <text class="dt" transform="translate(798 513) rotate(-10)">81.20</text>
        <text class="dx" x="778" y="519">×</text>
        <rect x="812" y="389" width="2.500" height="16" fill="url(#smG)"/><path class="orh" d="M808 393l6-6 2 3-3 2z"/><path class="tick" d="M811 406h4"/>
      </svg>

      <div class="crumb">
        <span class="cseg"><svg class="ci"><use href="#part"/></svg></span>
        <svg class="csep" viewBox="0 0 10 24"><path d="M1 0l8 12-8 12" fill="none" stroke="#ccc"/></svg>
        <span class="cseg s2"><svg class="ci" viewBox="0 0 20 20"><path d="M2 5l8-4 8 3v10l-8 5-8-4z" fill="#8cc3de" stroke="#4a7c96"/><path d="M2 5l8 4 8-4M10 9v10" fill="none" stroke="#4a7c96"/></svg></span>
        <svg class="csep" viewBox="0 0 10 24"><path d="M1 0l8 12-8 12" fill="none" stroke="#ccc"/></svg>
        <span class="cseg s3"><svg class="ci"><use href="#boss"/></svg><span class="ctext">凸台-拉 伸2</span></span>
        <span class="cact"><svg class="cend" viewBox="0 0 10 24"><path d="M0 0l9 12-9 12z" fill="#fafafa" stroke="#aac"/></svg><i class="csq"></i></span>
      </div>
      <div class="subcrumb">
        <svg class="sarrow" viewBox="0 0 14 14"><path d="M2 1h4v7h2V5l5 5-5 4v-3H2z" fill="#fff" stroke="#999"/></svg>
        <span class="sbox"><svg class="sbi"><use href="#sketch"/></svg><span>草图 2</span></span>
      </div>

      <svg class="baidu" viewBox="0 0 330 150" width="330" height="150">
        <text class="bk bk1" x="3" y="80">Bai</text>
        <g class="paw">
          <ellipse cx="115" cy="17" rx="9" ry="13"/><ellipse cx="135" cy="17" rx="9" ry="13"/><ellipse cx="98" cy="31" rx="9" ry="12" transform="rotate(-25 98 31)"/><ellipse cx="150" cy="37" rx="9" ry="12" transform="rotate(25 150 37)"/>
          <path d="M125 38c-12 0-15 10-22 17-10 9-14 17-6 25 7 5 18 0 28 0s21 5 28 0c8-8 4-16-6-25-7-7-10-17-22-17z"/>
        </g>
        <text class="bk bk2" x="103" y="77">du</text>
        <text class="bk bk3" x="167" y="77">经验</text>
        <text class="bk bk4" x="2" y="115">jingyan.baidu.com</text>
      </svg>
      <div class="xia">
        <span class="xia1">侠</span>
        <div class="xiar"><span class="xia2">xiayx.com</span><span class="xia3">游戏</span></div>
      </div>
    </div>
  </main>
</div>
</body>
</html>
```

FILE: styles.css
```css
*{box-sizing:border-box}
html,body{margin:0;padding:0}
body{width:1397px;height:821px;overflow:hidden;background:#fff;color:#000;font:12px Roboto,"Noto Sans CJK SC",sans-serif}
.defs{position:absolute}
.app{display:flex;flex-direction:column;height:821px}
svg{display:block;flex:none}

/* top bar */
.topbar{display:flex;height:31px;background:#f6f6f6;border-bottom:1px solid #8c8c8c;flex:none}
.menuzone{display:flex;align-items:center;width:601px;height:30px;border-right:3px solid #d8d8d8}
.logo{position:relative;z-index:3;display:flex;align-items:center;gap:4px;width:145px;height:35px;margin:0 0 0 10px;padding:0 0 0 5px;align-self:flex-start;background:linear-gradient(#fff,#dedede);border:1px solid #a8a8a8;border-top:0;outline:1px solid #e8e8e8}
.ds{width:29px;height:27px}
.brand{font:italic 14.500px "Liberation Sans",sans-serif;color:#c8182e;white-space:nowrap}
.brand b{font-weight:700;letter-spacing:.4px}
.menu{display:flex;gap:15.300px;margin-left:28px;font-size:13px;white-space:nowrap}
.menu small{font-size:10px}
.pin{width:14px;height:14px;margin-left:26px}
.quick{display:flex;align-items:center;height:30px;margin-left:14px}
.qi{display:flex;width:20px;height:30px;align-items:center;justify-content:center}
.qc{display:block;width:19px;height:30px;position:relative}
.qc::after,.vc::after,.cr::after{content:"";position:absolute;left:50%;top:50%;margin:-2px 0 0 -3px;border:3px solid transparent;border-top:4px solid #555;border-bottom:0}
.i18{width:18px;height:20px}
.i20{width:20px;height:20px}
.selbtn{display:flex;align-items:center;justify-content:center;width:25px;height:26px;margin-left:-2px;background:#b0b0b0;border:1px solid #777}
.seldrop{position:relative;display:block;width:14px;height:26px;background:#f6f6f6;border:1px solid #aaa;border-left:0}
.seldrop::after{content:"";position:absolute;left:3px;top:11px;border:3px solid transparent;border-top:4px solid #555;border-bottom:0}
.qt{margin-left:3px}
.q6{margin-left:6px}
.q5{margin-left:5px}
.doctitle{margin-left:auto;padding:0 50px 0 0;line-height:30px;font-size:13px;white-space:nowrap}
.doctitle span{font-size:10.800px}

/* ribbon */
.ribbon{display:flex;flex:none;height:87px;padding-top:6px;background:#f6f6f6;border-bottom:1px solid #999;font-size:13px;line-height:13px}
.group{display:flex;height:78px;border-right:1px solid #ccc}
.g1{width:234px;padding-left:5px}
.g2{width:240px}
.g3{width:216px}
.g4{width:88px}
.big{display:flex;flex-direction:column;align-items:center;height:78px;padding-top:5px;text-align:center;white-space:nowrap}
.big.low{padding-top:12px}
.big span{display:block}
.w54{width:54px}.w50{width:50px}.w49{width:49px}.w36{width:36px}
.ri{width:20px;height:20px}
.cr{position:relative;display:block;width:10px;height:6px;margin-top:auto;margin-bottom:10px}
.smalls{display:flex;flex-direction:column;margin-top:-1px}
.sr{display:flex;align-items:center;gap:5px;height:26px;white-space:nowrap}
.si{width:22px;height:20px}
.tight .sr{gap:4px}
.c3{margin-left:1px}
.c4{margin-left:12px}
.instant{display:flex;flex-direction:column;align-items:center;width:60px;height:78px;margin-left:1px;padding-top:11px;background:#b0b0b0;border:1px solid #888;font-size:12px;line-height:14px}
.i3d{width:20px;height:20px}

/* tabs */
.tabrow{display:flex;flex:none;height:22px;background:#fff;position:relative;z-index:2}
.tab{height:22px;line-height:20px;text-align:center;background:#d2d2d2;border-right:1px solid #8c8c8c;border-bottom:1px solid #8c8c8c;white-space:nowrap}
.tab.on{background:#f6f6f6;border-bottom-color:#8c8c8c;font-size:13px;color:#333}
.tab.w56{width:56px;font-size:13px}
.w66{width:66px}.w117{width:117px}
.viewbar{display:flex;margin:5px 0 0 395px;height:20px}
.vi{display:flex;justify-content:center;width:26px}
.vc{position:relative;display:block;width:14px;height:20px}
.vc::after{border-top-color:#999}
.v20{width:20px;height:20px}
.vtxt{font:bold 11px "Liberation Sans",sans-serif;fill:#3c8fbd}

/* panel */
.main{flex:1;display:flex;min-height:0}
.panel{position:relative;z-index:1;display:flex;flex:none;width:279px;background:#f6f6f6;border-right:1px solid #8c8c8c}
.strip{position:relative;width:32px;padding-top:12px;display:flex;flex-direction:column;align-items:center}
.grip{position:absolute;left:3px;top:2px;width:27px;border-top:2px dotted #b0b0b0}
.st{width:20px;height:20px;margin:3px 0}
.fade{opacity:.45}
.sp{border:0;height:1px;background:#aaa;margin:0}
.s1{width:25px;margin:6px 0 3px 3px}
.s2{width:25px;margin:1px 0 4px 3px}
.s3{width:32px;margin:7px 0 0}
.pane{width:246px;display:flex;flex-direction:column}
.handle{height:16px;margin-top:2px;border-top:1px solid #c8c8c8;border-bottom:1px solid #c8c8c8;display:flex;align-items:center;justify-content:center}
.knob{display:block;width:6px;height:6px;border-radius:50%;background:#b4b4b4;border:1px solid #888}
.mgr{position:relative;display:flex;height:27px;margin-top:4px;padding-right:46px;border-bottom:1px solid #8c8c8c}
.mt{display:flex;align-items:center;justify-content:center;width:40px;height:26px;background:#d2d2d2;border:1px solid #8c8c8c;border-left:0}
.mt.act{background:#f6f6f6;border-top:0;border-bottom:1px solid #f6f6f6;margin-bottom:-1px;height:27px}
.mi{width:19px;height:19px}
.chev{position:absolute;right:5px;top:6px;width:8px;height:12px}
.filter{height:25px;margin:0 2px 0 3px;background:#f6f6f6;border:1px solid #c8c8c8;border-top:0;padding:3px 0 0 4px}
.funnel{width:17px;height:20px}
.tree{font-size:12px}
.root{display:flex;align-items:center;height:22px;padding-left:3px;white-space:nowrap;overflow:hidden;width:244px}
.root .ti{width:17px;height:17px;margin-right:5px}
.rl{letter-spacing:.4px}
.lt{letter-spacing:1.500px}
.row{display:flex;align-items:center;height:22px;padding-left:5px;white-space:nowrap}
.child{padding-left:45px}
.ar,.noar{display:block;width:17px;flex:none}
.ar{position:relative;height:10px}
.ar::after{content:"";position:absolute;left:3px;top:1px;border:4px solid transparent;border-left:5px solid #666;border-right:0}
.ar.down::after{left:0;top:3px;border:4px solid transparent;border-top:5px solid #666;border-bottom:0}
.node{display:flex;align-items:center;gap:5px;height:21px;padding:0 4px 0 3px;border:1px solid transparent;margin-left:-1px}
.ti{width:18px;height:18px}
.sel{background:#a9cbe8;border-color:#3d8bbf}
.rollback{position:relative;height:3px;margin:0 2px -3px 0;background:#1c3fb0}
.off{color:#8e8e8e}
.off .ti{filter:grayscale(1);opacity:.5}
.gripper{position:absolute;right:-9px;top:386px;display:flex;align-items:center;justify-content:center;width:9px;height:40px;background:#f6f6f6;border:1px solid #8c8c8c;border-left:0}

/* canvas */
.canvas{position:relative;flex:1;overflow:hidden;background:#fff}
.model{position:absolute;left:0;top:0}
.ln{stroke:#000;stroke-width:1}
.cy{fill:#33ffff;stroke:#5f9ff2;stroke-width:1.500}
.dim{fill:none;stroke:#111;stroke-width:.9}
.dimo{fill:none;stroke:#a85f00;stroke-width:.9;stroke-dasharray:6 10}
.ah{fill:#000}
.dt{font:bold 11.500px "Liberation Sans",sans-serif;fill:#000}
.dg{font:bold 12px "Liberation Sans",sans-serif;fill:#555}
.dphi{font:13px "Liberation Sans",sans-serif;fill:#000}
.dx{font:11px "Liberation Sans",sans-serif;fill:#000}
.yl{font:8px "Liberation Sans",sans-serif;fill:#000}
.orh{fill:#f09a1c;stroke:#7a4d08;stroke-width:.5}
.tick{stroke:#9cc;stroke-width:1}
.bl{fill:none;stroke:#1414e6;stroke-width:1}
.blf{fill:#1414e6}
.star{stroke:#1414e6;stroke-width:1;fill:none}
.blp{fill:#3a3ae0;fill-opacity:.65;stroke:#3a3ae0;stroke-opacity:.4}
.bd{fill:#2626e0;stroke:#111;stroke-width:.4}

/* breadcrumb */
.crumb{position:absolute;left:14px;top:17px;display:flex;align-items:center;width:207px;height:25px;background:#fafafa;border:1px solid #ccc}
.cseg{display:flex;align-items:center;justify-content:center;width:31px;padding-left:10px}
.cseg.s2{width:18px;padding:0}
.cseg.s3{width:auto;padding:0;gap:5px;margin-left:3px}
.ci{width:19px;height:19px}
.csep{width:10px;height:23px}
.cseg:first-child{width:32px}
.ctext{font-size:10.500px;white-space:nowrap}
.cact{position:relative;display:flex;align-items:center;margin-left:auto;width:42px;height:23px;background:#c3d9ec}
.cend{width:10px;height:23px}
.csq{display:block;width:14px;height:14px;margin-left:5px;background:linear-gradient(135deg,#cfe6f2,#6fa9c8);border:1px solid #54748a}
.subcrumb{position:absolute;left:128px;top:46px;display:flex;align-items:center;gap:5px}
.sarrow{width:13px;height:14px}
.sbox{display:flex;align-items:center;gap:7px;width:60px;height:23px;padding-left:2px;background:#fafafa;border:1px solid #d4d4d4;font-size:10.500px;white-space:nowrap}
.sbi{width:16px;height:18px}

/* watermark */
.baidu{position:absolute;left:791px;top:528px}
.bk{fill:#fff;stroke:#d8d8d8;stroke-width:1.200;font-family:"Liberation Sans",sans-serif}
.bk1{font-size:52px;font-weight:700}
.bk2{font-size:38px}
.bk3{font-size:40px;font-family:"Noto Sans CJK SC",sans-serif;font-weight:700}
.bk4{font-size:33px}
.paw{fill:#fff;stroke:#d8d8d8;stroke-width:1.200}
.xia{position:absolute;right:0;bottom:0;display:flex;align-items:center;gap:19px;width:180px;height:80px;padding-left:14px;background:rgba(0,0,0,.5);color:#fff;overflow:hidden}
.xia1{font:700 66px/80px "Noto Sans CJK SC",sans-serif;transform:skewX(-8deg)}
.xiar{display:flex;flex-direction:column;gap:3px}
.xia2{font:14px/16px "Noto Sans",sans-serif}
.xia3{font:900 30px/32px "Noto Sans CJK SC",sans-serif}
```
